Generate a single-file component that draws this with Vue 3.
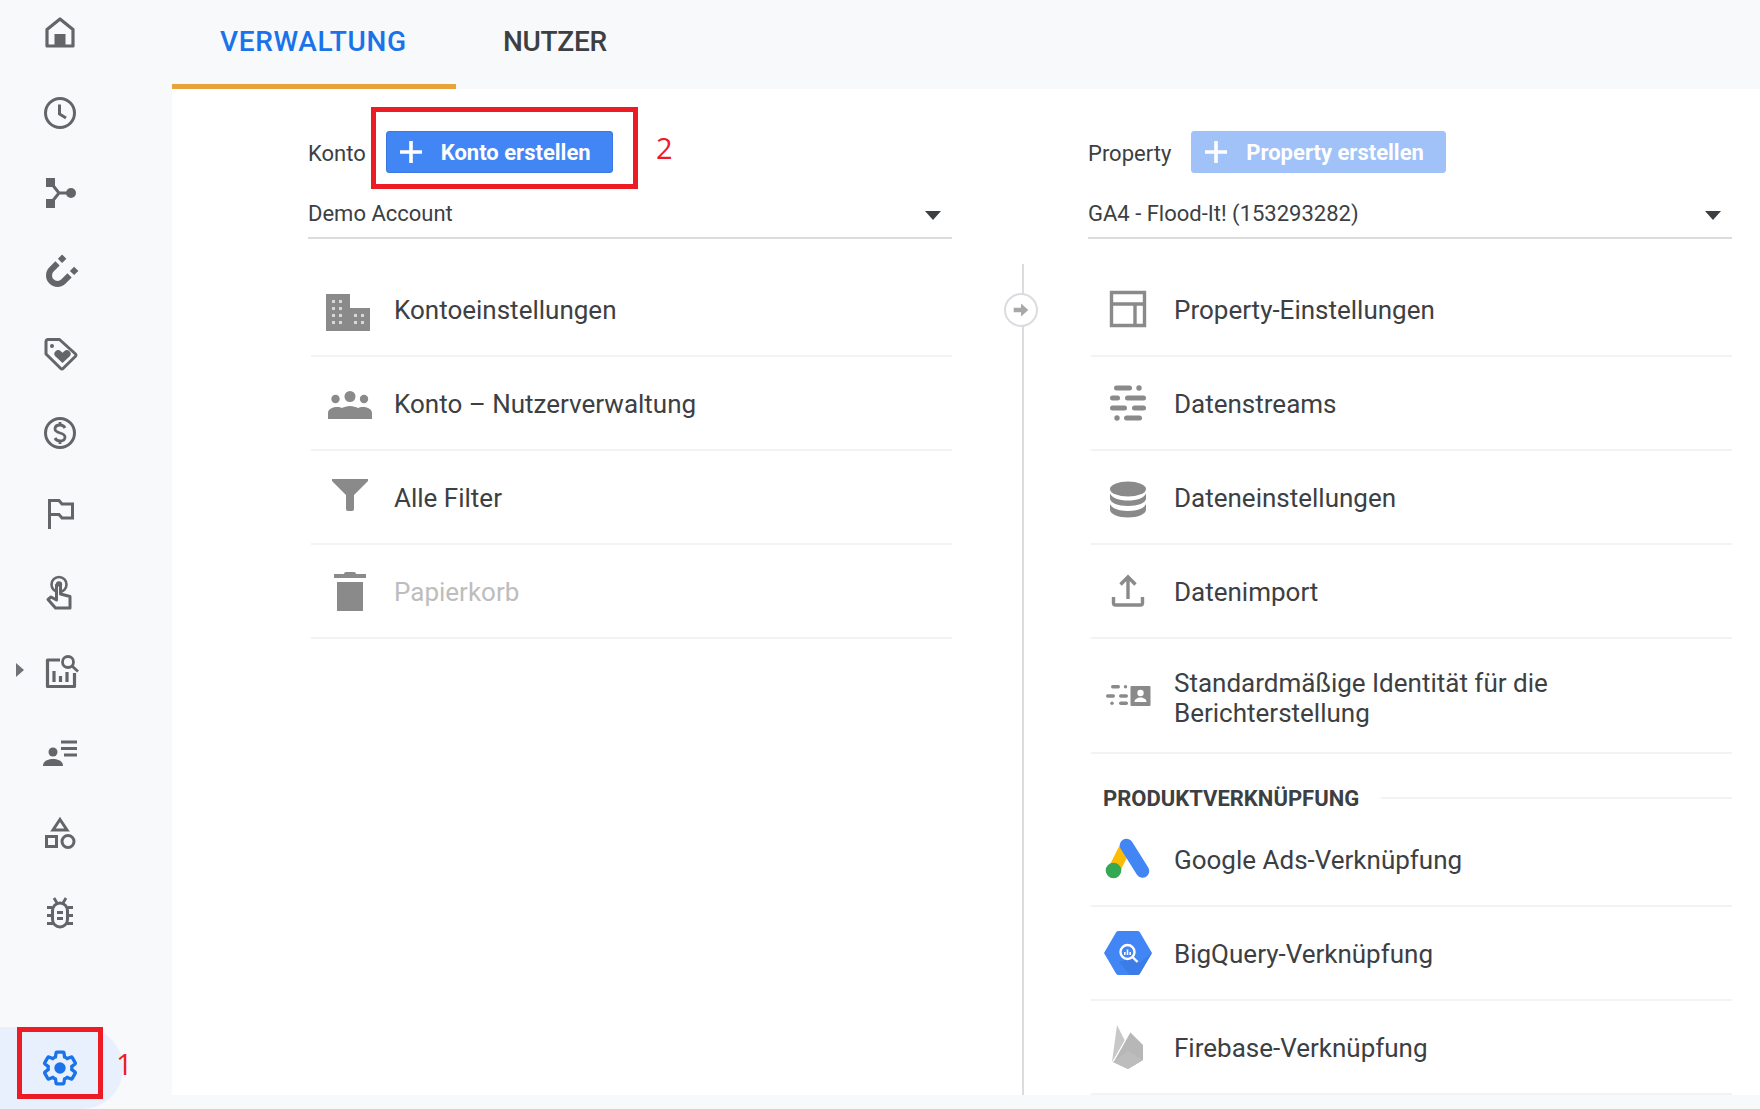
<script setup>
const nav = [
  { id: 'home', svg: '<path d="M5 31V14.500L18 4l13 10.500V31z" fill="none" stroke="currentColor" stroke-width="3.200" stroke-linejoin="round"/><rect x="12.500" y="19" width="11" height="13" fill="currentColor"/>' },
  { id: 'clock', svg: '<circle cx="18" cy="18" r="14.500" fill="none" stroke="currentColor" stroke-width="3"/><path d="M17.500 9.500V19l6.500 4" fill="none" stroke="currentColor" stroke-width="3"/>' },
  { id: 'merge', svg: '<rect x="4" y="3" width="9" height="9" fill="currentColor"/><rect x="4" y="24" width="9" height="9" fill="currentColor"/><circle cx="29" cy="18" r="5" fill="currentColor"/><path d="M9 8l8 10-8 10M17 18h12" fill="none" stroke="currentColor" stroke-width="3"/>' },
  { id: 'magnet', svg: '<g transform="rotate(45 18 18)"><path d="M9.500 13v8.500a8.500 8.500 0 0 0 17 0V13" fill="none" stroke="currentColor" stroke-width="6"/><rect x="6.500" y="3.500" width="6" height="6" fill="currentColor"/><rect x="23.500" y="3.500" width="6" height="6" fill="currentColor"/></g>' },
  { id: 'tag', svg: '<path d="M4 6.500a2 2 0 0 1 2-2h11.500L33.500 19a1.500 1.500 0 0 1 0 2.200L21 33.500a1.500 1.500 0 0 1-2.200 0L4 19z" fill="none" stroke="currentColor" stroke-width="3" stroke-linejoin="round"/><circle cx="10" cy="11" r="2" fill="currentColor"/><path d="M20.500 28l-7-6.500a3.700 3.700 0 0 1 5.300-5.200l1.700 1.500 1.700-1.500a3.700 3.700 0 0 1 5.300 5.200z" fill="currentColor"/>' },
  { id: 'dollar', svg: '<circle cx="18" cy="18" r="14.500" fill="none" stroke="currentColor" stroke-width="3"/><path d="M23 13c-1-2-3-3-5-3-3 0-5 1.600-5 4 0 5 10 3 10 8 0 2.400-2 4-5 4-2 0-4-1-5-3M18 7v3M18 26v3" fill="none" stroke="currentColor" stroke-width="2.800"/>' },
  { id: 'flag', svg: '<path d="M7.500 34V5.500H17l3 3.500h10.500v14H20l-3-3.500H7.500" fill="none" stroke="currentColor" stroke-width="3"/>' },
  { id: 'touch', svg: '<circle cx="17" cy="9.500" r="7.500" fill="none" stroke="currentColor" stroke-width="2.600"/><circle cx="17" cy="9.500" r="3.200" fill="currentColor"/><path d="M14.500 10v15l-5.500-3-3 2.500L13.500 33H28V21.500l-9.500-2.500V10z" fill="#f8f9fa" stroke="currentColor" stroke-width="3" stroke-linejoin="round"/>' },
  { id: 'report', svg: '<path d="M18 5H5.500v26.500H32.500V18" fill="none" stroke="currentColor" stroke-width="3.200" stroke-linejoin="round"/><path d="M12 16v11M18.500 21v6M25 17v10" stroke="currentColor" stroke-width="3.200"/><circle cx="26" cy="7" r="5.500" fill="none" stroke="currentColor" stroke-width="2.800"/><path d="M30 11l6 5.500" stroke="currentColor" stroke-width="2.800"/>' },
  { id: 'audience', svg: '<circle cx="11" cy="17" r="4.500" fill="currentColor"/><path d="M1 31c0-5 5-7 10-7s10 2 10 7z" fill="currentColor"/><path d="M19 7h16M19 13.500h16M22 20h13" stroke="currentColor" stroke-width="3"/>' },
  { id: 'shapes', svg: '<path d="M18 4.500L25 15H11z" fill="none" stroke="currentColor" stroke-width="3"/><rect x="4.500" y="21.500" width="10" height="10" fill="none" stroke="currentColor" stroke-width="3"/><circle cx="26" cy="26.500" r="6" fill="none" stroke="currentColor" stroke-width="3"/>' },
  { id: 'bug', svg: '<rect x="10.500" y="8" width="15" height="24" rx="7.500" fill="none" stroke="currentColor" stroke-width="3"/><path d="M15 17.500h6M15 23.500h6M5 12.500h5M26 12.500h5M5 20.500h5M26 20.500h5M5 28.500h6M25 28.500h6M12 3l3 5M24 3l-3 5" stroke="currentColor" stroke-width="2.800"/>' }
]

const icons = {
  building: '<path d="M0 7h24v14h20v23H0z" fill="currentColor"/><g fill="#d8d8d8"><rect x="6" y="13" width="3" height="3"/><rect x="13" y="13" width="3" height="3"/><rect x="6" y="20" width="3" height="3"/><rect x="13" y="20" width="3" height="3"/><rect x="6" y="27" width="3" height="3"/><rect x="13" y="27" width="3" height="3"/><rect x="6" y="34" width="3" height="3"/><rect x="13" y="34" width="3" height="3"/><rect x="28" y="27" width="3" height="3"/><rect x="35" y="27" width="3" height="3"/><rect x="28" y="34" width="3" height="3"/><rect x="35" y="34" width="3" height="3"/></g>',
  people: '<circle cx="24" cy="15.500" r="5.500" fill="currentColor"/><circle cx="9.500" cy="18" r="4.200" fill="currentColor"/><circle cx="38" cy="18" r="4.200" fill="currentColor"/><path d="M2 38v-6c0-3.500 4-6 9-6 2.500 0 4 .5 5 1 2-1 5-2 8-2s6 1 8 2c1-.5 2.500-1 5-1 5 0 9 2.500 9 6v6z" fill="currentColor"/>',
  funnel: '<path d="M6 4h36v2L28 20v14a2 2 0 0 1-2 2h-4a2 2 0 0 1-2-2V20L6 6z" fill="currentColor"/>',
  trash: '<path d="M18 5a2 2 0 0 1 2-2h8a2 2 0 0 1 2 2h10v4H8V5zM11 13h26v29H11z" fill="currentColor"/>',
  property: '<path d="M5.500 5.500h33v33h-33zM5.500 17h33M29 17v21.500" fill="none" stroke="currentColor" stroke-width="3.400"/>',
  streams: '<g fill="currentColor"><rect x="8" y="4.500" width="18" height="5" rx="2.500"/><circle cx="33" cy="7" r="2.700"/><rect x="4" y="14.500" width="10" height="5" rx="2.500"/><rect x="19" y="14.500" width="21" height="5" rx="2.500"/><rect x="4" y="24.500" width="17" height="5" rx="2.500"/><rect x="26" y="24.500" width="14" height="5" rx="2.500"/><circle cx="11" cy="37" r="2.700"/><rect x="18" y="34.500" width="18" height="5" rx="2.500"/></g>',
  database: '<ellipse cx="22" cy="14" rx="18" ry="7.500" fill="currentColor"/><path d="M4 18.500c2 4.500 9 7 18 7s16-2.500 18-7v5c0 4.500-8 7.500-18 7.500S4 28 4 23.500zM4 29c2 4.500 9 7 18 7s16-2.500 18-7v5.500c0 4.500-8 8-18 8s-18-3.500-18-8z" fill="currentColor"/>',
  upload: '<path d="M22 30V9M14.500 15.500L22 8l7.500 7.500M7.500 28v6a2 2 0 0 0 2 2h25a2 2 0 0 0 2-2v-6" fill="none" stroke="currentColor" stroke-width="3.400"/>',
  identity: '<g fill="currentColor"><rect x="5" y="11" width="9" height="3.400" rx="1.700"/><circle cx="19.500" cy="12.700" r="1.700"/><rect x="0" y="20.300" width="9" height="3.400" rx="1.700"/><rect x="13" y="20.300" width="9" height="3.400" rx="1.700"/><circle cx="6" cy="29.300" r="1.700"/><rect x="13" y="27.600" width="9" height="3.400" rx="1.700"/><rect x="24.500" y="12" width="20" height="20" rx="1"/></g><circle cx="34.500" cy="19" r="3.200" fill="#fff"/><path d="M28.500 28c0-3 3-4.500 6-4.500s6 1.500 6 4.500z" fill="#fff"/>',
  ads: '<path d="M20 9L8 33" stroke="#fbbc04" stroke-width="12"/><path d="M20.500 8.500L36.500 34" stroke="#4285f4" stroke-width="13.500" stroke-linecap="round"/><circle cx="7.500" cy="33.500" r="7.800" fill="#34a853"/>',
  bigquery: '<path d="M-2 22L10 1.500a3 3 0 0 1 2-1.500h20a3 3 0 0 1 2 1.500L46 22 34 42.500a3 3 0 0 1-2 1.500H12a3 3 0 0 1-2-1.500z" fill="#4285f4"/><path d="M27 26l6 6 13-10-12 20.500a3 3 0 0 1-2 1.500h-8L13 31z" fill="#3b78e0" opacity=".7"/><circle cx="21.500" cy="21" r="7" fill="none" stroke="#fff" stroke-width="2.400"/><path d="M18.800 21v3M21.500 18.500v5.500M24.200 21v3" stroke="#fff" stroke-width="1.600"/><path d="M26 25.500l5.500 5.500" stroke="#fff" stroke-width="2.400"/>',
  firebase: '<path d="M6 37L11 0l8 16z" fill="#c8c8c8"/><path d="M7 37L24 7l13 13v15l-15 9z" fill="#b7b7b7"/><path d="M7 37L24 7M7 37L19 16" stroke="#fff" stroke-width="1.200"/><path d="M7 37l15-11 15 9-15 9z" fill="#bdbdbd"/>'
}

const accountRows = [
  { label: 'Kontoeinstellungen', icon: 'building' },
  { label: 'Konto – Nutzerverwaltung', icon: 'people' },
  { label: 'Alle Filter', icon: 'funnel' },
  { label: 'Papierkorb', icon: 'trash', off: true }
]
const propertyRows = [
  { label: 'Property-Einstellungen', icon: 'property' },
  { label: 'Datenstreams', icon: 'streams' },
  { label: 'Dateneinstellungen', icon: 'database' },
  { label: 'Datenimport', icon: 'upload' },
  { label: 'Standardmäßige Identität für die Berichterstellung', icon: 'identity', tall: true }
]
const linkRows = [
  { label: 'Google Ads-Verknüpfung', icon: 'ads' },
  { label: 'BigQuery-Verknüpfung', icon: 'bigquery' },
  { label: 'Firebase-Verknüpfung', icon: 'firebase' }
]
</script>

<template>
  <div class="page">
    <aside class="side">
      <div v-for="n in nav" :key="n.id" class="nav-item">
        <span v-if="n.id === 'report'" class="expand"></span>
        <svg viewBox="0 0 36 36" width="36" height="36" v-html="n.svg"></svg>
      </div>
      <div class="active">
        <svg viewBox="0 0 24 24" width="38" height="38">
          <path d="M19.430 12.980c.04-.32.07-.64.07-.98s-.03-.66-.07-.98l2.110-1.650c.19-.15.24-.42.12-.64l-2-3.460c-.12-.22-.39-.3-.61-.22l-2.490 1c-.52-.4-1.080-.73-1.690-.98l-.38-2.650C14.460 2.180 14.250 2 14 2h-4c-.25 0-.46.18-.49.42l-.38 2.650c-.61.25-1.170.59-1.690.98l-2.490-1c-.23-.09-.49 0-.61.22l-2 3.460c-.13.22-.07.49.12.64l2.110 1.650c-.04.32-.07.65-.07.98s.03.66.07.98l-2.110 1.650c-.19.15-.24.42-.12.64l2 3.460c.12.22.39.3.61.22l2.490-1c.52.4 1.080.73 1.690.98l.38 2.650c.03.24.24.42.49.42h4c.25 0 .46-.18.49-.42l.38-2.650c.61-.25 1.170-.59 1.690-.98l2.490 1c.23.09.49 0 .61-.22l2-3.460c.12-.22.07-.49-.12-.64l-2.110-1.650z" fill="none" stroke="#1a73e8" stroke-width="2.100"/>
          <circle cx="12" cy="12" r="3.600" fill="#1a73e8"/>
        </svg>
        <span class="mark-box mark-gear"></span>
        <span class="mark-num mark-one">1</span>
      </div>
    </aside>

    <main class="main">
      <nav class="tabs">
        <div class="tab on">VERWALTUNG</div>
        <div class="tab next">NUTZER</div>
      </nav>

      <section class="panel">
        <div class="col">
          <div class="head">
            <span class="head-label">Konto</span>
            <button class="btn">
              <svg viewBox="0 0 24 24" width="24" height="24"><path d="M12 1v22M1 12h22" stroke="#fff" stroke-width="3.600"/></svg>
              Konto erstellen
            </button>
            <span class="mark-box mark-btn"></span>
            <span class="mark-num mark-two">2</span>
          </div>
          <div class="select">
            <span>Demo Account</span>
            <span class="caret"></span>
          </div>
          <ul class="rows">
            <li v-for="r in accountRows" :key="r.label" class="row" :class="{ off: r.off }">
              <svg class="ico" viewBox="0 0 44 44" width="44" height="44" v-html="icons[r.icon]"></svg>
              <span class="txt">{{ r.label }}</span>
            </li>
          </ul>
        </div>

        <div class="divider">
          <span class="hop">
            <svg viewBox="0 0 24 24" width="22" height="22"><path d="M4 9.500h8V5l8 7-8 7v-4.500H4z" fill="#a8a8a8"/></svg>
          </span>
        </div>

        <div class="col">
          <div class="head">
            <span class="head-label">Property</span>
            <button class="btn muted">
              <svg viewBox="0 0 24 24" width="24" height="24"><path d="M12 1v22M1 12h22" stroke="#fff" stroke-width="3.600"/></svg>
              Property erstellen
            </button>
          </div>
          <div class="select">
            <span>GA4 - Flood-It! (153293282)</span>
            <span class="caret"></span>
          </div>
          <ul class="rows">
            <li v-for="r in propertyRows" :key="r.label" class="row" :class="{ tall: r.tall }">
              <svg class="ico" viewBox="0 0 44 44" width="44" height="44" v-html="icons[r.icon]"></svg>
              <span class="txt">{{ r.label }}</span>
            </li>
          </ul>
          <div class="section">
            <span>PRODUKTVERKNÜPFUNG</span>
            <i></i>
          </div>
          <ul class="rows links">
            <li v-for="r in linkRows" :key="r.label" class="row">
              <svg class="ico" viewBox="0 0 44 44" width="44" height="44" v-html="icons[r.icon]"></svg>
              <span class="txt">{{ r.label }}</span>
            </li>
          </ul>
        </div>
      </section>
    </main>
  </div>
</template>

<style scoped>
.page {
  display: flex;
  height: 1109px;
  width: 1760px;
  overflow: hidden;
  background: #f8f9fa;
  font-family: Roboto, "Liberation Sans", sans-serif;
  color: #3c4043;
}
.side {
  width: 172px;
  flex: none;
  display: flex;
  flex-direction: column;
  padding-top: 15px;
  box-sizing: border-box;
  position: relative;
}
.nav-item {
  position: relative;
  height: 36px;
  margin-bottom: 44px;
  padding-left: 42px;
  color: #636569;
}
.nav-item svg { display: block; overflow: visible; }
.expand {
  position: absolute;
  left: 16px;
  top: 8px;
  border-left: 8px solid #6f7377;
  border-top: 7px solid transparent;
  border-bottom: 7px solid transparent;
}
.active {
  position: absolute;
  left: 0;
  bottom: 0;
  width: 123px;
  height: 82px;
  background: #e8f0fe;
  border-radius: 0 41px 41px 0;
  box-sizing: border-box;
  padding: 22px 0 0 41px;
}
.active svg { display: block; }
.mark-box {
  position: absolute;
  border: 5px solid #ed1c24;
  box-sizing: border-box;
}
.mark-gear { left: 17px; top: 0; width: 86px; height: 72px; }
.mark-num {
  position: absolute;
  color: #ed1c24;
  font-family: "Open Sans", sans-serif;
  font-size: 29px;
  line-height: 34px;
}
.mark-one { left: 116px; top: 20px; }

.main { flex: 1; display: flex; flex-direction: column; min-width: 0; }
.tabs { height: 89px; display: flex; flex: none; }
.tab {
  font-size: 28px;
  font-weight: 500;
  line-height: 84px;
  color: #3c4043;
  padding: 0 48px;
}
.tab.on {
  color: #1a73e8;
  width: 284px;
  box-sizing: border-box;
  border-bottom: 5px solid #e8a33a;
  letter-spacing: .65px;
}
.tab.next { padding-left: 47px; letter-spacing: -.3px; }
.panel {
  height: 1006px;
  flex: none;
  background: #fff;
  padding: 42px 28px 0 136px;
  display: flex;
  box-sizing: border-box;
  overflow: hidden;
}
.col { width: 644px; flex: none; position: relative; }
.head { display: flex; align-items: center; height: 42px; position: relative; }
.head-label { font-size: 22px; margin-right: 20px; padding-top: 2px; }
.btn {
  height: 42px;
  border: 1px solid #3b78e0;
  border-radius: 3px;
  background: #4285f4;
  color: #fff;
  font: 700 22px Roboto, "Liberation Sans", sans-serif;
  display: flex;
  align-items: center;
  gap: 18px;
  padding: 0 21px 0 12px;
  box-sizing: border-box;
}
.btn.muted { background: #a0c2f9; border-color: #a0c2f9; }
.mark-btn { left: 63px; top: -24px; width: 267px; height: 82px; }
.mark-two { left: 348px; top: 0; }
.select {
  height: 66px;
  border-bottom: 2px solid #dadce0;
  display: flex;
  align-items: center;
  justify-content: space-between;
  font-size: 22px;
  padding: 16px 11px 0 0;
  box-sizing: border-box;
}
.caret {
  border-top: 9px solid #3c4043;
  border-left: 8px solid transparent;
  border-right: 8px solid transparent;
  margin-top: 4px;
}
.rows { list-style: none; margin: 24px 0 0 3px; padding: 0; }
.row {
  height: 94px;
  display: flex;
  align-items: center;
  padding-left: 15px;
  gap: 24px;
  border-bottom: 2px solid #f1f3f4;
  box-sizing: border-box;
  color: #8a8a8a;
}
.row.tall { height: 115px; }
.ico { flex: none; overflow: visible; }
.txt { font-size: 26px; line-height: 30px; color: #3c4043; max-width: 420px; padding-top: 2px; }
.row.tall .txt { padding-top: 5px; }
.row.off .txt { color: #bdbdbd; }
.section {
  display: flex;
  align-items: center;
  gap: 22px;
  margin: 31px 0 0 15px;
  height: 26px;
  font-size: 22px;
  font-weight: 700;
  color: #3c4043;
}
.section i { flex: 1; height: 2px; background: #f1f3f4; }
.links { margin-top: 2px; }
.divider {
  width: 136px;
  flex: none;
  position: relative;
  margin-top: 133px;
  box-sizing: border-box;
}
.divider::before {
  content: "";
  position: absolute;
  left: 70px;
  top: 0;
  bottom: 0;
  width: 2px;
  background: #dadce0;
}
.hop {
  position: absolute;
  left: 52px;
  top: 29px;
  width: 34px;
  height: 34px;
  border: 2px solid #dadce0;
  border-radius: 50%;
  background: #fff;
  display: flex;
  align-items: center;
  justify-content: center;
  box-sizing: border-box;
}
</style>
